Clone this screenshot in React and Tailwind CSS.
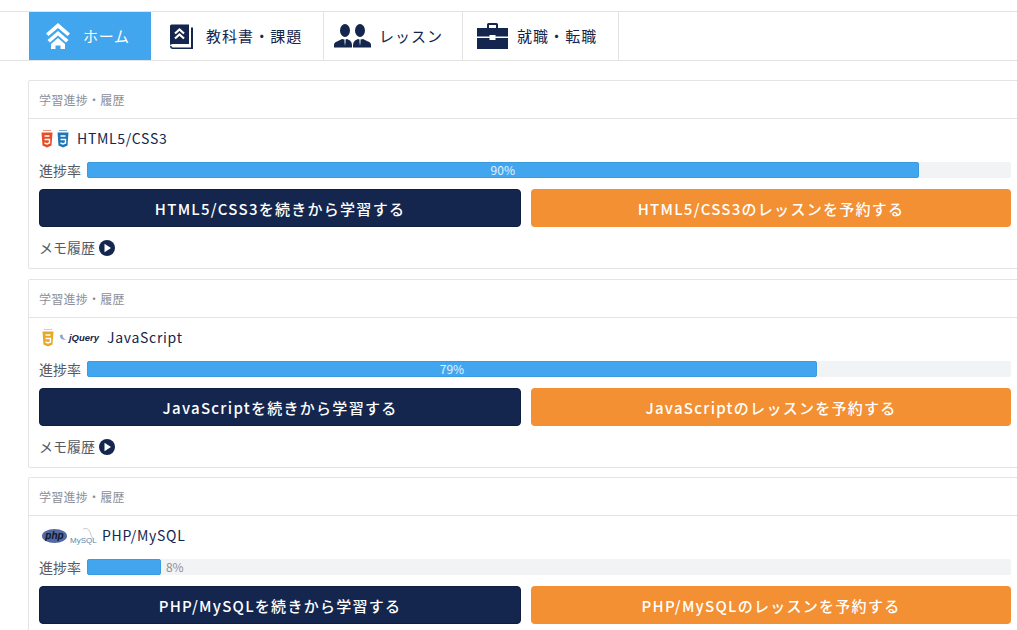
const font = '[font-family:"Noto_Sans_CJK_JP","Noto_Sans",sans-serif]'

function HomeIcon() {
    return (
        <svg width="24" height="26" viewBox="0 0 24 26" fill="#fff">
            <path d="M12 0 L24 10.500 L21.500 13 L12 5 L2.500 13 L0 10.500 Z" />
            <path d="M12 8 L22.500 17 L20 19.500 L12 12.500 L4 19.500 L1.500 17 Z" />
            <path d="M12 15 L19 21 V26 H14.500 V22.500 H9.500 V26 H5 V21 Z" />
        </svg>
    )
}

function BookIcon() {
    return (
        <svg width="23" height="25" viewBox="0 0 23 25">
            <path d="M0 2 Q0 0.500 1.500 0.500 H19 V20 H3 Q0 20 0 22 Z" fill="#14264d" />
            <path d="M0 22 Q0 25 3 25 H23 V3.500 H21 V23.500 H3 Q1.500 23.500 1.500 22" fill="#14264d" />
            <path d="M5 9.500 L9.500 5.500 L14 9.500 M5 14.500 L9.500 10.500 L14 14.500" stroke="#fff" strokeWidth="2.200" fill="none" />
        </svg>
    )
}

function PeopleIcon() {
    return (
        <svg width="37" height="24" viewBox="0 0 37 24" fill="#14264d">
            <ellipse cx="11" cy="6.500" rx="5" ry="6.500" />
            <ellipse cx="26" cy="6.500" rx="5" ry="6.500" />
            <path d="M0 23.500 V21 Q0 18.500 3 17.500 L8 15 L10.500 15.500 V18 L11 22 L11.500 18 V15.500 L13 15 L16 16.500 Q18 18 18 21 V23.500 Z" />
            <path d="M19 23.500 V21 Q19 18 21 16.500 L24 15 L25.500 15.500 V18 L26 22 L26.500 18 V15.500 L29 15 L34 17.500 Q37 18.500 37 21 V23.500 Z" />
        </svg>
    )
}

function CaseIcon() {
    return (
        <svg width="31" height="26" viewBox="0 0 31 26" fill="#14264d">
            <path d="M10 5 V1.500 Q10 0 11.500 0 H19.500 Q21 0 21 1.500 V5 H19 V2 H12 V5 Z" />
            <path d="M0 5 H31 V13.500 H18.500 V12 H12.500 V13.500 H0 Z" />
            <path d="M0 15 H12.500 V17 H18.500 V15 H31 V26 H0 Z" />
        </svg>
    )
}

function Html5Icon({color}) {
    return (
        <svg width="12" height="18" viewBox="0 0 12 18">
            <path d="M2 0.500 H10" stroke={color} strokeWidth="1" opacity="0.600" />
            <path d="M0.500 2.500 H11.500 L10.500 15.500 L6 17.500 L1.500 15.500 Z" fill={color} />
            <path d="M3.500 6 H8.500 M3.500 9.500 H8.500 V13 L6 14 L3.500 13" stroke="#fff" strokeWidth="1.400" fill="none" />
        </svg>
    )
}

function CardIcons({type}) {
    if (type === 'html') {
        return (
            <div className="flex items-center gap-[4px] ml-[2px]">
                <Html5Icon color="#e44d26" />
                <Html5Icon color="#1f75b8" />
            </div>
        )
    }
    if (type === 'js') {
        return (
            <div className="flex items-center gap-[5px] ml-[3px]">
                <Html5Icon color="#e8a825" />
                <div className="flex items-center gap-[1px] w-[40px]">
                    <svg width="10" height="9" viewBox="0 0 10 9">
                        <path d="M1 2 Q1 8 9 7 Q4 6 4 1 Q2 1 1 2 Z" fill="#8fa6c9" />
                    </svg>
                    <span className="text-[9.500px] leading-none italic font-bold text-[#14264d] [font-family:'Liberation_Sans',sans-serif]">jQuery</span>
                </div>
            </div>
        )
    }
    return (
        <div className="flex items-center gap-[3px] ml-[3px]">
            <div className="w-[25px] h-[14px] rounded-[50%] bg-[#54699f] flex items-center justify-center">
                <span className="text-[10px] leading-none italic font-bold text-[#10182c] [font-family:'Liberation_Sans',sans-serif]">php</span>
            </div>
            <div className="relative w-[24px] h-[18px] flex items-end">
                <span className="text-[8px] leading-none text-[#5b86a8] [font-family:'Liberation_Sans',sans-serif]">MySQL</span>
                <svg className="absolute right-0 top-0" width="12" height="14" viewBox="0 0 12 14">
                    <path d="M1 2 Q6 0 8 5 Q9 9 11 12" stroke="#b8bcc4" strokeWidth="0.800" fill="none" />
                </svg>
            </div>
        </div>
    )
}

function Card({type, name, pct, gap, memo = true}) {
    return (
        <div className={`w-[994px] shrink-0 border border-[#e3e3e8] rounded-[2px] bg-white ${gap}`}>
            <div className="h-[38px] border-b border-[#e3e3e8] pl-[10px] flex items-center">
                <span className="text-[12px] text-[#8b8f98] tracking-[0.02em]">学習進捗・履歴</span>
            </div>
            <div className="px-[10px]">
                <div className="h-[43px] flex items-center gap-[8px] pb-[4px]">
                    <CardIcons type={type} />
                    <span className="text-[14px] text-[#14264d] tracking-[0.05em]">{name}</span>
                </div>
                <div className="flex items-center gap-[6px] h-[16px]">
                    <span className="text-[14px] text-[#555a64] w-[42px] shrink-0 whitespace-nowrap">進捗率</span>
                    <div className="flex-1 h-[16px] bg-[#f2f3f5] rounded-[2px] flex items-center">
                        <div
                            className="h-full bg-[#42a6ee] border border-[#3a9be0] rounded-[2px] flex items-center justify-center text-[12px] text-white/85"
                            style={{width: `${pct}%`}}
                        >
                            {pct > 10 && `${pct}%`}
                        </div>
                        {pct <= 10 && <span className="ml-[5px] text-[12px] text-[#8b8f98]">{pct}%</span>}
                    </div>
                </div>
                <div className="flex gap-[10px] mt-[11px]">
                    <button className="flex-1 h-[38px] pt-[2px] bg-[#14264d] border border-[#0f1e40] rounded-[4px] text-white text-[15px] font-medium tracking-[0.085em]">
                        {name}を続きから学習する
                    </button>
                    <button className="flex-1 h-[38px] pt-[2px] bg-[#f29033] rounded-[4px] text-white text-[15px] font-medium tracking-[0.085em]">
                        {name}のレッスンを予約する
                    </button>
                </div>
                <div className="h-[41px] flex items-center gap-[4px]">
                    {memo && <span className="text-[14px] text-[#555a64]">メモ履歴</span>}
                    {memo && (
                        <svg width="16" height="16" viewBox="0 0 16 16">
                            <circle cx="8" cy="8" r="8" fill="#14264d" />
                            <path d="M5.500 3.800 L12 8 L5.500 12.200 Z" fill="#fff" />
                        </svg>
                    )}
                </div>
            </div>
        </div>
    )
}

export default function App() {
    return (
        <div className={`w-[1017px] h-[630px] overflow-hidden bg-white ${font}`}>
            <div className="mt-[11px] h-[50px] border-y border-[#e3e3e3] pl-[29px] flex">
                <div className="w-[122px] bg-[#42a6ee] flex items-center pl-[17px] gap-[13px]">
                    <HomeIcon />
                    <span className="text-[15px] text-white tracking-[0.05em]">ホーム</span>
                </div>
                <div className="w-[173px] border-r border-[#e3e3e3] flex items-center pl-[19px] gap-[13px]">
                    <BookIcon />
                    <span className="text-[15px] text-[#14264d] tracking-[0.07em]">教科書・課題</span>
                </div>
                <div className="w-[139px] border-r border-[#e3e3e3] flex items-center pl-[10px] gap-[8px]">
                    <PeopleIcon />
                    <span className="text-[15px] text-[#14264d] tracking-[0.067em]">レッスン</span>
                </div>
                <div className="w-[156px] border-r border-[#e3e3e3] flex items-center pl-[14px] gap-[9px]">
                    <CaseIcon />
                    <span className="text-[15px] text-[#14264d] tracking-[0.07em]">就職・転職</span>
                </div>
            </div>
            <div className="pl-[28px] pt-[19px] flex flex-col">
                <Card type="html" name="HTML5/CSS3" pct={90} gap="mb-[10px]" />
                <Card type="js" name="JavaScript" pct={79} gap="mb-[9px]" />
                <Card type="php" name="PHP/MySQL" pct={8} gap="" memo={false} />
            </div>
        </div>
    )
}
